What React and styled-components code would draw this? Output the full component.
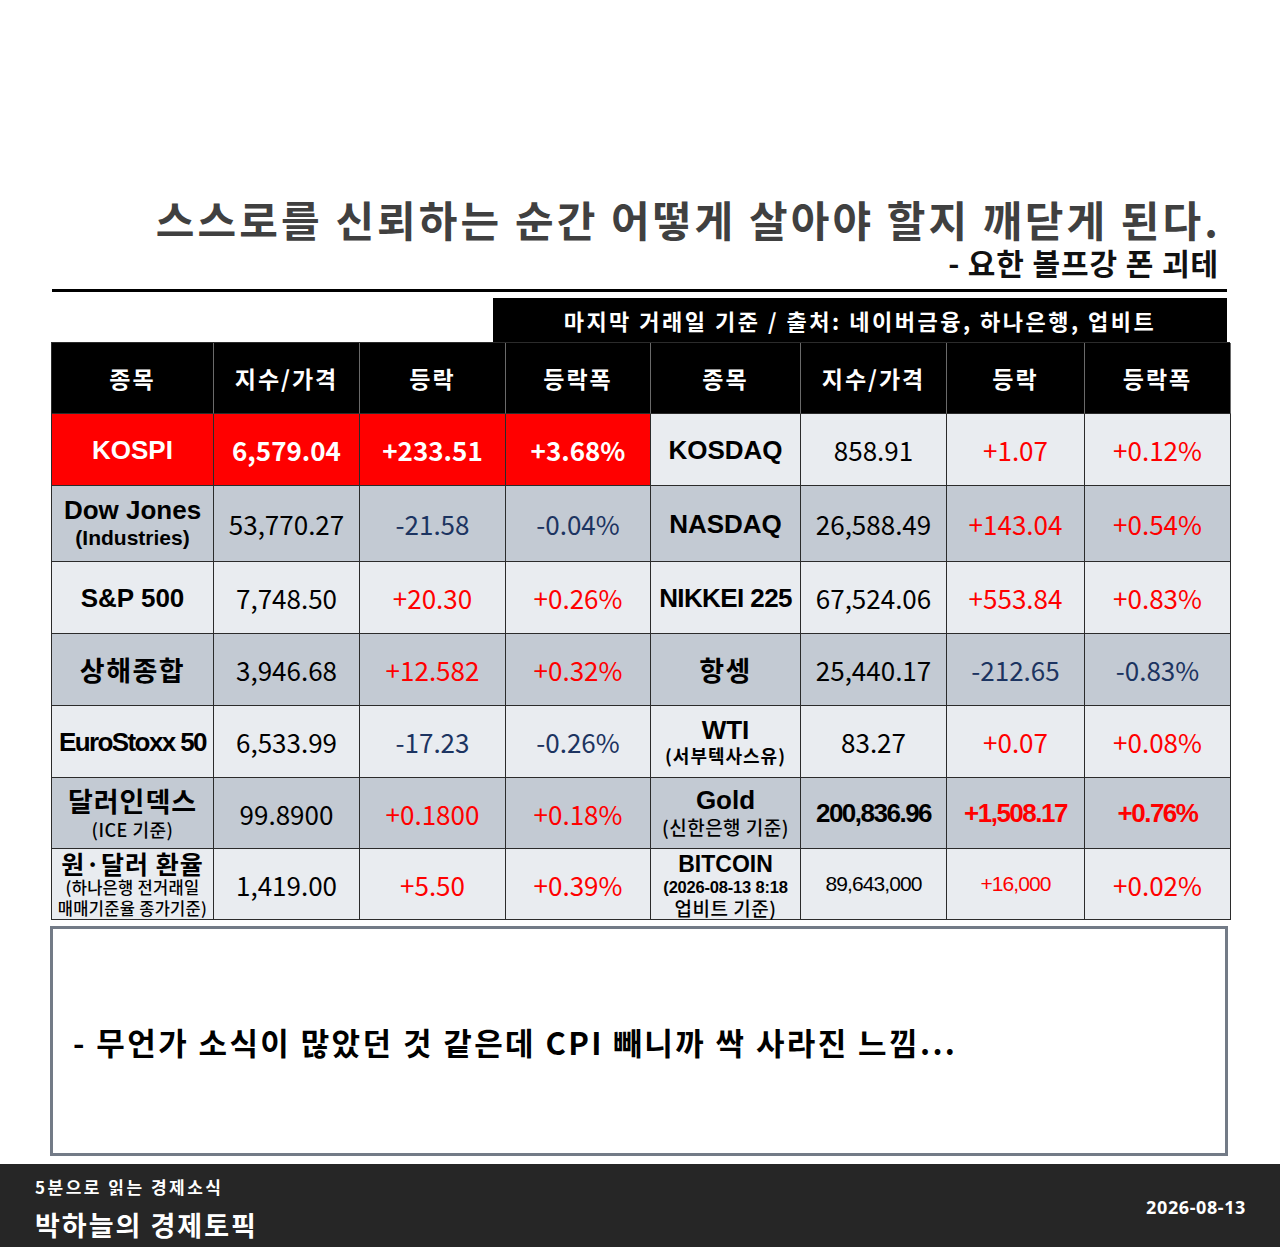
import React from "react";
import styled, { createGlobalStyle } from "styled-components";

const Global = createGlobalStyle`
  html, body { margin: 0; padding: 0; background: #fff; }
  body { font-family: "Noto Sans CJK KR", "Noto Sans", sans-serif; }
`;

const KR = `"Noto Sans CJK KR", "Noto Sans", sans-serif`;
const LAT = `"Liberation Sans", "Noto Sans CJK KR", sans-serif`;

const Page = styled.div`
  width: 1280px;
  height: 1247px;
  display: flex;
  flex-direction: column;
  overflow: hidden;
`;

const Quote = styled.div`
  margin-top: 194px;
  padding-right: 62px;
  text-align: right;
  font-family: ${KR};
  font-weight: 700;
`;

const QuoteLine = styled.div`
  font-size: 42px;
  line-height: 50px;
  color: #404040;
  letter-spacing: 3.1px;
  margin-right: -3px;
`;

const Author = styled.div`
  font-size: 30px;
  line-height: 36px;
  color: #111;
  letter-spacing: 0.9px;
  margin-right: -1px;
`;

const Rule = styled.div`
  margin: 9px 0 0 52px;
  width: 1175px;
  height: 3px;
  background: #000;
`;

const Banner = styled.div`
  margin: 6px 0 0 493px;
  width: 734px;
  height: 44px;
  background: #000;
  color: #fff;
  font-family: ${KR};
  font-weight: 700;
  font-size: 22px;
  letter-spacing: 2.5px;
  display: flex;
  align-items: center;
  justify-content: center;
`;

const Table = styled.div`
  margin-left: 51px;
  width: 1179px;
  display: grid;
  grid-template-columns: 162px 146px 146px 145px 150px 146px 138px 146px;
  border-left: 1px solid #2b2b2b;
  border-top: 1px solid #2b2b2b;
  box-sizing: border-box;
`;

const Cell = styled.div`
  box-sizing: border-box;
  height: ${(p) => p.$h}px;
  border-right: 1px solid ${(p) => (p.$head ? "#6a6a6a" : "#2b2b2b")};
  border-bottom: 1px solid #2b2b2b;
  background: ${(p) => p.$bg};
  color: ${(p) => p.$color || "#000"};
  display: flex;
  flex-direction: column;
  align-items: center;
  justify-content: center;
  text-align: center;
  white-space: nowrap;
`;

const HeadText = styled.span`
  font-family: ${KR};
  font-weight: 700;
  font-size: 23px;
  letter-spacing: 2px;
  color: #fff;
`;

const Name = styled.span`
  font-family: ${(p) => (p.$kr ? KR : LAT)};
  font-weight: 700;
  font-size: ${(p) => p.$size || 26}px;
  line-height: ${(p) => p.$lh || 30}px;
  letter-spacing: ${(p) => p.$ls || 0}px;
`;

const Sub = styled.span`
  font-family: ${(p) => (p.$kr ? KR : LAT)};
  font-weight: ${(p) => p.$w || 700};
  font-size: ${(p) => p.$size || 18}px;
  line-height: ${(p) => p.$lh || 22}px;
  letter-spacing: ${(p) => p.$ls || 0}px;
`;

const Value = styled.span`
  font-family: ${(p) => (p.$alt ? LAT : KR)};
  font-weight: ${(p) => (p.$bold ? 700 : 400)};
  font-size: ${(p) => p.$size || 26}px;
  letter-spacing: ${(p) => p.$ls || 0}px;
`;

const Memo = styled.div`
  margin: 6px 0 0 50px;
  width: 1178px;
  height: 230px;
  box-sizing: border-box;
  border: 3px solid #737b87;
  display: flex;
  align-items: center;
  padding: 0 0 0 20px;
  font-family: ${KR};
  font-weight: 700;
  font-size: 31px;
  letter-spacing: 2.4px;
  color: #000;
`;

const Footer = styled.div`
  margin-top: 8px;
  flex: 1;
  background: #262626;
  color: #fff;
  display: flex;
  justify-content: space-between;
  align-items: center;
  padding: 0 34px 0 35px;
  font-family: ${KR};
  font-weight: 700;
`;

const Brand = styled.div`
  display: flex;
  flex-direction: column;
  gap: 10px;
  padding-top: 6px;
`;

const BrandSmall = styled.div`
  font-size: 17px;
  line-height: 22px;
  letter-spacing: 2.5px;
`;

const BrandBig = styled.div`
  font-size: 27px;
  line-height: 34px;
  letter-spacing: 2px;
`;

const DateText = styled.div`
  font-family: "Noto Sans", sans-serif;
  font-size: 18px;
  letter-spacing: 0.6px;
  padding-top: 2px;
`;

const LIGHT = "#e9ecf0";
const DARK = "#c3cad3";
const RED = "#ff0000";
const NAVY = "#1c3461";

const heights = [71, 72, 76, 72, 72, 72, 71, 71];
const headers = ["종목", "지수/가격", "등락", "등락폭", "종목", "지수/가격", "등락", "등락폭"];

const col = (v) => (v.startsWith("-") ? NAVY : RED);

const rows = [
  {
    bg: LIGHT,
    left: { name: <Name style={{ color: "#fff" }}>KOSPI</Name>, v: ["6,579.04", "+233.51", "+3.68%"], kospi: true },
    right: { name: <Name>KOSDAQ</Name>, v: ["858.91", "+1.07", "+0.12%"] },
  },
  {
    bg: DARK,
    left: {
      name: (
        <>
          <Name $lh={29}>Dow Jones</Name>
          <Sub $size={21} $lh={26}>(Industries)</Sub>
        </>
      ),
      v: ["53,770.27", "-21.58", "-0.04%"],
    },
    right: { name: <Name>NASDAQ</Name>, v: ["26,588.49", "+143.04", "+0.54%"] },
  },
  {
    bg: LIGHT,
    left: { name: <Name>S&amp;P 500</Name>, v: ["7,748.50", "+20.30", "+0.26%"] },
    right: { name: <Name $ls={-0.6}>NIKKEI 225</Name>, v: ["67,524.06", "+553.84", "+0.83%"] },
  },
  {
    bg: DARK,
    left: { name: <Name $kr $size={27} $ls={1.5}>상해종합</Name>, v: ["3,946.68", "+12.582", "+0.32%"] },
    right: { name: <Name $kr $size={27} $ls={1.5}>항셍</Name>, v: ["25,440.17", "-212.65", "-0.83%"] },
  },
  {
    bg: LIGHT,
    left: { name: <Name $ls={-1.6}>EuroStoxx 50</Name>, v: ["6,533.99", "-17.23", "-0.26%"] },
    right: {
      name: (
        <>
          <Name $lh={28}>WTI</Name>
          <Sub $kr $size={18} $lh={23} $ls={1}>(서부텍사스유)</Sub>
        </>
      ),
      v: ["83.27", "+0.07", "+0.08%"],
    },
  },
  {
    bg: DARK,
    left: {
      name: (
        <>
          <Name $kr $size={27} $lh={33} $ls={1}>달러인덱스</Name>
          <Sub $kr $size={18} $lh={25} $w={500} $ls={0.5}>(ICE 기준)</Sub>
        </>
      ),
      v: ["99.8900", "+0.1800", "+0.18%"],
    },
    right: {
      name: (
        <>
          <Name $lh={28}>Gold</Name>
          <Sub $kr $size={19} $lh={26} $w={500} $ls={0.5}>(신한은행 기준)</Sub>
        </>
      ),
      v: ["200,836.96", "+1,508.17", "+0.76%"],
      gold: true,
    },
  },
  {
    bg: LIGHT,
    left: {
      name: (
        <>
          <Name $kr $size={25} $lh={27} $ls={1}>원·달러 환율</Name>
          <Sub $kr $size={16.5} $lh={21} $w={500} $ls={0.3}>(하나은행 전거래일</Sub>
          <Sub $kr $size={16.5} $lh={20} $w={500} $ls={0.3}>매매기준율 종가기준)</Sub>
        </>
      ),
      v: ["1,419.00", "+5.50", "+0.39%"],
    },
    right: {
      name: (
        <>
          <Name $size={23} $lh={26}>BITCOIN</Name>
          <Sub $size={16.5} $lh={20} $ls={-0.2}>(2026-08-13 8:18</Sub>
          <Sub $kr $size={19} $lh={21} $w={500} $ls={0.5}>업비트 기준)</Sub>
        </>
      ),
      v: ["89,643,000", "+16,000", "+0.02%"],
      bitcoin: true,
    },
  },
];

function Side({ data, bg, h }) {
  if (data.kospi) {
    return (
      <>
        <Cell $h={h} $bg={RED} $color="#fff">{data.name}</Cell>
        {data.v.map((v) => (
          <Cell key={v} $h={h} $bg={RED} $color="#fff">
            <Value $bold $size={26}>{v}</Value>
          </Cell>
        ))}
      </>
    );
  }
  return (
    <>
      <Cell $h={h} $bg={bg}>{data.name}</Cell>
      {data.v.map((v, i) => {
        const color = i === 0 ? "#000" : col(v);
        if (data.gold) {
          return (
            <Cell key={v} $h={h} $bg={bg} $color={color}>
              <Value $alt $bold $size={26} $ls={-1.5}>{v}</Value>
            </Cell>
          );
        }
        if (data.bitcoin && i < 2) {
          return (
            <Cell key={v} $h={h} $bg={bg} $color={color}>
              <Value $alt $size={21} $ls={-0.9}>{v}</Value>
            </Cell>
          );
        }
        return (
          <Cell key={v} $h={h} $bg={bg} $color={color}>
            <Value>{v}</Value>
          </Cell>
        );
      })}
    </>
  );
}

export default function App() {
  return (
    <Page>
      <Global />
      <Quote>
        <QuoteLine>스스로를 신뢰하는 순간 어떻게 살아야 할지 깨닫게 된다.</QuoteLine>
        <Author>- 요한 볼프강 폰 괴테</Author>
      </Quote>
      <Rule />
      <Banner>마지막 거래일 기준 / 출처: 네이버금융, 하나은행, 업비트</Banner>
      <Table>
        {headers.map((t, i) => (
          <Cell key={i} $h={heights[0]} $bg="#000" $head>
            <HeadText>{t}</HeadText>
          </Cell>
        ))}
        {rows.map((r, i) => (
          <React.Fragment key={i}>
            <Side data={r.left} bg={r.bg} h={heights[i + 1]} />
            <Side data={r.right} bg={r.bg} h={heights[i + 1]} />
          </React.Fragment>
        ))}
      </Table>
      <Memo>- 무언가 소식이 많았던 것 같은데 CPI 빼니까 싹 사라진 느낌...</Memo>
      <Footer>
        <Brand>
          <BrandSmall>5분으로 읽는 경제소식</BrandSmall>
          <BrandBig>박하늘의 경제토픽</BrandBig>
        </Brand>
        <DateText>2026-08-13</DateText>
      </Footer>
    </Page>
  );
}
